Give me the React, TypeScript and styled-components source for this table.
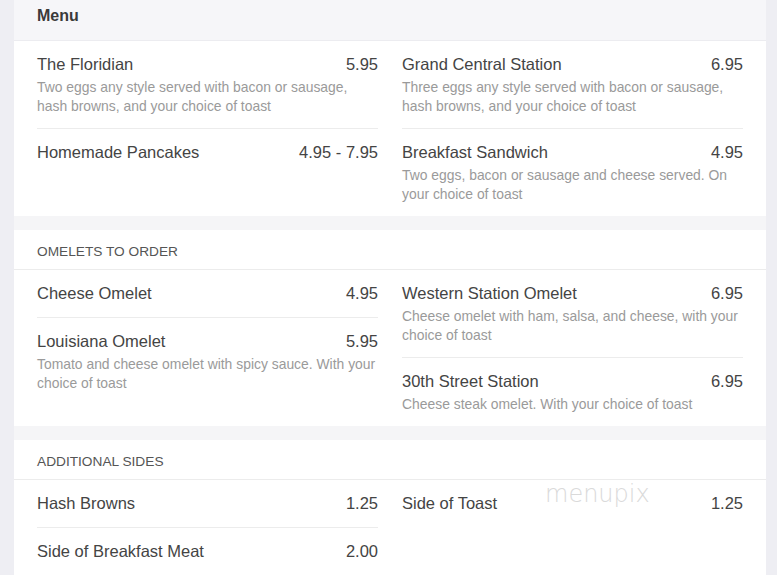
import React from 'react';
import styled, { createGlobalStyle } from 'styled-components';

const GlobalStyle = createGlobalStyle`
  html, body {
    margin: 0;
    padding: 0;
    background: #eeeef3;
    font-family: "Liberation Sans", Arial, sans-serif;
  }
  * { box-sizing: border-box; }
`;

const Page = styled.div`
  margin: 0 11px 0 14px;
  min-height: 575px;
  background: #f5f5f7;
  display: flex;
  flex-direction: column;
  gap: 14px;
`;

const MenuHeader = styled.div`
  height: 41px;
  padding: 6px 23px 0;
  background: #f6f6f9;
  border-bottom: 1px solid #ececf0;
  font-size: 16px;
  line-height: 20px;
  font-weight: bold;
  color: #3a3a3a;
  margin-bottom: -14px;
`;

const Card = styled.section`
  position: relative;
  background: #ffffff;
`;

const SectionTitle = styled.div`
  height: 40px;
  padding: 3px 23px 0;
  display: flex;
  align-items: center;
  border-bottom: 1px solid #ececec;
  font-size: 13.7px;
  color: #555;
  text-transform: uppercase;
`;

const Columns = styled.div`
  display: grid;
  grid-template-columns: 1fr 1fr;
  column-gap: 24px;
  padding: 0 23px;
  align-items: start;
`;

const Column = styled.div`
  display: flex;
  flex-direction: column;
`;

const Item = styled.div`
  padding: 11px 0 12px;
  border-bottom: 1px solid #ececec;

  &:last-child {
    border-bottom: none;
  }
`;

const ItemHead = styled.div`
  display: flex;
  justify-content: space-between;
  align-items: baseline;
  font-size: 16.5px;
  line-height: 24px;
  color: #444;
`;

const Price = styled.span`
  white-space: nowrap;
  margin-left: 12px;
`;

const Description = styled.div`
  margin-top: 2px;
  font-size: 13.9px;
  line-height: 19px;
  color: #9a9a9a;
`;

const Watermark = styled.div`
  position: absolute;
  left: 531px;
  top: 40px;
  font-family: "DejaVu Sans", sans-serif;
  font-weight: 200;
  font-size: 24px;
  color: #dadada;
  pointer-events: none;
`;

type MenuItem = { name: string; price: string; desc?: string };

const breakfast: MenuItem[][] = [
  [
    { name: 'The Floridian', price: '5.95', desc: 'Two eggs any style served with bacon or sausage, hash browns, and your choice of toast' },
    { name: 'Homemade Pancakes', price: '4.95 - 7.95' },
  ],
  [
    { name: 'Grand Central Station', price: '6.95', desc: 'Three eggs any style served with bacon or sausage, hash browns, and your choice of toast' },
    { name: 'Breakfast Sandwich', price: '4.95', desc: 'Two eggs, bacon or sausage and cheese served. On your choice of toast' },
  ],
];

const omelets: MenuItem[][] = [
  [
    { name: 'Cheese Omelet', price: '4.95' },
    { name: 'Louisiana Omelet', price: '5.95', desc: 'Tomato and cheese omelet with spicy sauce. With your choice of toast' },
  ],
  [
    { name: 'Western Station Omelet', price: '6.95', desc: 'Cheese omelet with ham, salsa, and cheese, with your choice of toast' },
    { name: '30th Street Station', price: '6.95', desc: 'Cheese steak omelet. With your choice of toast' },
  ],
];

const sides: MenuItem[][] = [
  [
    { name: 'Hash Browns', price: '1.25' },
    { name: 'Side of Breakfast Meat', price: '2.00' },
  ],
  [{ name: 'Side of Toast', price: '1.25' }],
];

const ItemList: React.FC<{ columns: MenuItem[][] }> = ({ columns }) => (
  <Columns>
    {columns.map((col, i) => (
      <Column key={i}>
        {col.map((item) => (
          <Item key={item.name}>
            <ItemHead>
              <span>{item.name}</span>
              <Price>{item.price}</Price>
            </ItemHead>
            {item.desc && <Description>{item.desc}</Description>}
          </Item>
        ))}
      </Column>
    ))}
  </Columns>
);

export default function App() {
  return (
    <>
      <GlobalStyle />
      <Page>
        <MenuHeader>Menu</MenuHeader>
        <Card>
          <ItemList columns={breakfast} />
        </Card>
        <Card>
          <SectionTitle>Omelets to Order</SectionTitle>
          <ItemList columns={omelets} />
        </Card>
        <Card>
          <SectionTitle>Additional Sides</SectionTitle>
          <ItemList columns={sides} />
          <Watermark>menupix</Watermark>
        </Card>
      </Page>
    </>
  );
}
